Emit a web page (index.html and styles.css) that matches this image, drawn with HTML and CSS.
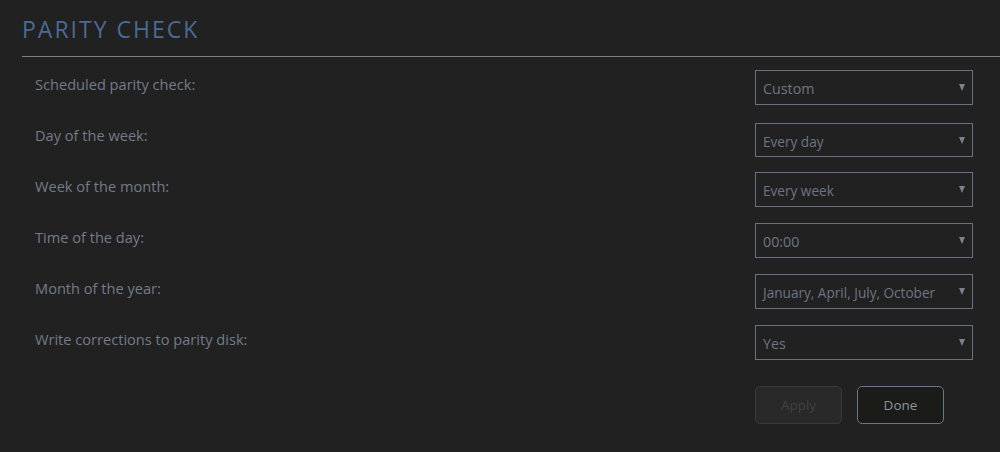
FILE: index.html
```html
<!DOCTYPE html>
<html lang="en">
<head>
<meta charset="utf-8">
<title>Parity Check</title>
<link rel="stylesheet" href="styles.css">
</head>
<body>
<section class="panel">
  <header class="panel-head">
    <h1 class="panel-title">PARITY CHECK</h1>
  </header>
  <form class="settings">
    <div class="row">
      <label class="label">Scheduled parity check:</label>
      <div class="select big"><span>Custom</span></div>
    </div>
    <div class="row">
      <label class="label">Day of the week:</label>
      <div class="select shifted"><span>Every day</span></div>
    </div>
    <div class="row">
      <label class="label">Week of the month:</label>
      <div class="select"><span>Every week</span></div>
    </div>
    <div class="row">
      <label class="label">Time of the day:</label>
      <div class="select big"><span>00:00</span></div>
    </div>
    <div class="row">
      <label class="label">Month of the year:</label>
      <div class="select"><span>January, April, July, October</span></div>
    </div>
    <div class="row">
      <label class="label">Write corrections to parity disk:</label>
      <div class="select big"><span>Yes</span></div>
    </div>
    <div class="actions">
      <button type="button" class="btn disabled">Apply</button>
      <button type="button" class="btn">Done</button>
    </div>
  </form>
</section>
</body>
</html>
```
FILE: styles.css
```css
html, body {
  margin: 0;
  padding: 0;
  background: #212121;
}

body {
  width: 1000px;
  height: 452px;
  overflow: hidden;
  font-family: "Open Sans", "Noto Sans", sans-serif;
}

.panel-head {
  margin-left: 22px;
  height: 56px;
  border-bottom: 1px solid #7b8088;
}

.panel-title {
  margin: 0;
  padding-top: 14px;
  font-size: 23px;
  font-weight: 400;
  letter-spacing: 2px;
  line-height: 30px;
  color: #4b6a95;
}

.settings {
  display: flex;
  flex-direction: column;
  gap: 16px;
  padding-top: 13px;
}

.row {
  display: flex;
  align-items: flex-start;
  height: 35px;
}

.label {
  flex: 1;
  padding-left: 35px;
  padding-top: 3px;
  font-size: 14.6px;
  line-height: 22px;
  color: #737b88;
}

.select {
  position: relative;
  box-sizing: border-box;
  width: 218px;
  height: 35px;
  margin-right: 27px;
  border: 1px solid #687180;
  display: flex;
  align-items: center;
  padding: 2px 7px 0;
  font-size: 13.6px;
  color: #6d7583;
}

.select.shifted {
  margin-top: 2px;
  height: 34px;
}

.select.big {
  font-size: 14.3px;
}

.select::after {
  content: "";
  position: absolute;
  right: 7px;
  top: 13px;
  width: 0;
  height: 0;
  border-left: 3px solid transparent;
  border-right: 3px solid transparent;
  border-top: 7px solid #7a8290;
}

.actions {
  display: flex;
  gap: 15px;
  padding-left: 755px;
  margin-top: 10px;
}

.btn {
  box-sizing: border-box;
  width: 87px;
  height: 38px;
  border-radius: 5px;
  font-family: inherit;
  font-size: 13.5px;
  padding: 0;
  background: #1b1b17;
  border: 1px solid #68758a;
  color: #8a93a2;
}

.btn.disabled {
  background: #282928;
  border-color: #393b39;
  color: #3f4341;
}
```
